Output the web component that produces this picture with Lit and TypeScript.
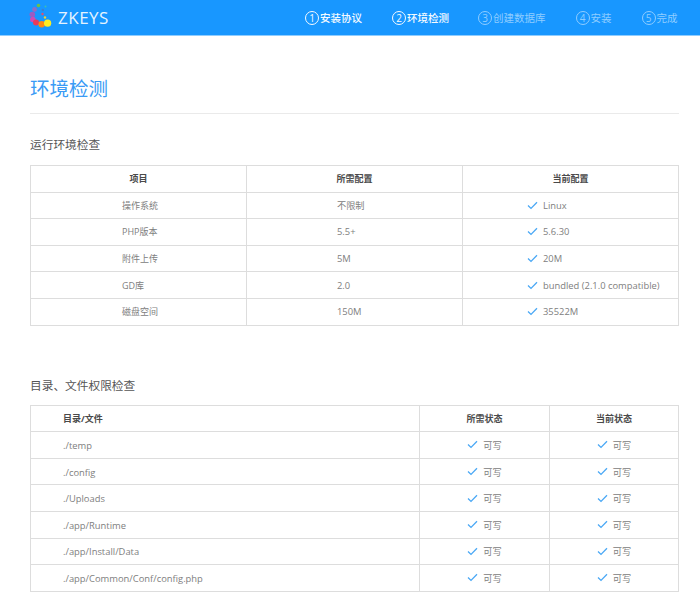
import { LitElement, html, css, svg } from 'lit';
import { customElement } from 'lit/decorators.js';

const steps = [
  { n: '1', label: '安装协议', on: true, gap: 0 },
  { n: '2', label: '环境检测', on: true, gap: 30 },
  { n: '3', label: '创建数据库', on: false, gap: 29 },
  { n: '4', label: '安装', on: false, gap: 30 },
  { n: '5', label: '完成', on: false, gap: 30 },
];

const envRows = [
  ['操作系统', '不限制', 'Linux'],
  ['PHP版本', '5.5+', '5.6.30'],
  ['附件上传', '5M', '20M'],
  ['GD库', '2.0', 'bundled (2.1.0 compatible)'],
  ['磁盘空间', '150M', '35522M'],
];

const dirRows = [
  './temp',
  './config',
  './Uploads',
  './app/Runtime',
  './app/Install/Data',
  './app/Common/Conf/config.php',
];

const dots = [
  [38.5, 5.5, 1.8, '#6cc04a'],
  [34.5, 9.5, 2.4, '#8a6fc8'],
  [32.3, 14.5, 2.8, '#9a5cc4'],
  [32.8, 19.5, 2.8, '#d04bb4'],
  [36, 22.6, 3, '#ea3a5a'],
  [41.7, 24.3, 3.2, '#ff8a10'],
  [47.6, 23.2, 3.6, '#ffee20'],
  [45.5, 6.6, 1, '#3cc0b0'],
  [42.8, 10, 1.2, '#3a7fd0'],
  [42.5, 14, 1.2, '#e05070'],
  [45, 17.5, 1.2, '#f5d030'],
];

const check = html`<svg class="check" viewBox="0 0 11 9" width="11" height="9">
  <path d="M1 4.6 L4 7.4 L10 1.2" fill="none" stroke="#4aa8f5" stroke-width="1.3" />
</svg>`;

@customElement('app-root')
export class AppRoot extends LitElement {
  static styles = css`
    :host {
      display: block;
      background: #fff;
      font-family: 'Open Sans', 'Noto Sans CJK SC', sans-serif;
      color: #777;
    }
    .topbar {
      display: flex;
      align-items: center;
      height: 35px;
      background: #1897ff;
      border-bottom: 1px solid #8fcdff;
    }
    .logo {
      display: block;
      flex: none;
    }
    .brand {
      width: 247px;
      flex: none;
      color: #e4f3ff;
      font-size: 17px;
      letter-spacing: 0.5px;
    }
    .steps {
      display: flex;
      align-items: center;
    }
    .step {
      display: flex;
      align-items: center;
      color: #f4faff;
      font-size: 10.5px;
      font-weight: 500;
    }
    .step.off {
      color: #8fcdff;
      font-weight: 400;
    }
    .num {
      box-sizing: border-box;
      width: 14px;
      height: 14px;
      margin-right: 1px;
      border: 1px solid currentColor;
      border-radius: 50%;
      font-size: 10px;
      font-weight: 400;
      line-height: 12px;
      text-align: center;
    }
    main {
      padding: 0 21px 0 30px;
    }
    h1 {
      margin: 0;
      padding: 37px 0 9px;
      border-bottom: 1px solid #eaeaea;
      color: #3a9bf5;
      font-size: 19.5px;
      font-weight: 400;
      line-height: 31px;
    }
    h2 {
      margin: 0;
      color: #555;
      font-size: 11.7px;
      font-weight: 400;
      line-height: 18px;
    }
    .first {
      margin-top: 21px;
    }
    .second {
      margin-top: 50px;
    }
    table {
      width: 649px;
      margin-top: 11px;
      border-collapse: collapse;
      table-layout: fixed;
    }
    table.env {
      margin-top: 12px;
    }
    th,
    td {
      box-sizing: border-box;
      height: 26.6px;
      padding: 0;
      border: 1px solid #ddd;
      font-size: 9.4px;
    }
    th {
      color: #4a4a4a;
      font-size: 9px;
      font-weight: 700;
      text-align: center;
    }
    td {
      color: #808080;
    }
    .env th {
      padding-bottom: 1px;
    }
    td.name {
      padding-left: 91px;
      font-size: 9px;
    }
    td.need {
      padding-left: 90px;
    }
    td.zh {
      font-size: 9.2px;
    }
    .path,
    th.path {
      padding-top: 1px;
      padding-left: 32px;
      text-align: left;
    }
    .ok {
      display: flex;
      align-items: center;
      gap: 5px;
    }
    .envok {
      padding-left: 64px;
    }
    .dirok {
      justify-content: center;
    }
    .check {
      display: block;
      flex: none;
    }
  `;

  render() {
    return html`
      <header class="topbar">
        <svg class="logo" width="58" height="35" viewBox="0 0 58 35">
          ${dots.map(([x, y, r, c]) => svg`<circle cx=${x} cy=${y} r=${r} fill=${c} />`)}
        </svg>
        <div class="brand">ZKEYS</div>
        <nav class="steps">
          ${steps.map(
            (s) => html`<div class="step ${s.on ? '' : 'off'}" style="margin-left:${s.gap}px">
              <span class="num">${s.n}</span>${s.label}
            </div>`
          )}
        </nav>
      </header>
      <main>
        <h1>环境检测</h1>
        <h2 class="first">运行环境检查</h2>
        <table class="env">
          <colgroup><col style="width:216px" /><col style="width:216px" /><col /></colgroup>
          <tr><th>项目</th><th>所需配置</th><th>当前配置</th></tr>
          ${envRows.map(
            (r) => html`<tr>
              <td class="name">${r[0]}</td>
              <td class="need ${r[1] === '不限制' ? 'zh' : ''}">${r[1]}</td>
              <td><div class="ok envok">${check}<span>${r[2]}</span></div></td>
            </tr>`
          )}
        </table>
        <h2 class="second">目录、文件权限检查</h2>
        <table>
          <colgroup><col style="width:389px" /><col style="width:130px" /><col /></colgroup>
          <tr><th class="path">目录/文件</th><th>所需状态</th><th>当前状态</th></tr>
          ${dirRows.map(
            (p) => html`<tr>
              <td class="path">${p}</td>
              <td class="zh"><div class="ok dirok">${check}<span>可写</span></div></td>
              <td class="zh"><div class="ok dirok">${check}<span>可写</span></div></td>
            </tr>`
          )}
        </table>
      </main>
    `;
  }
}
